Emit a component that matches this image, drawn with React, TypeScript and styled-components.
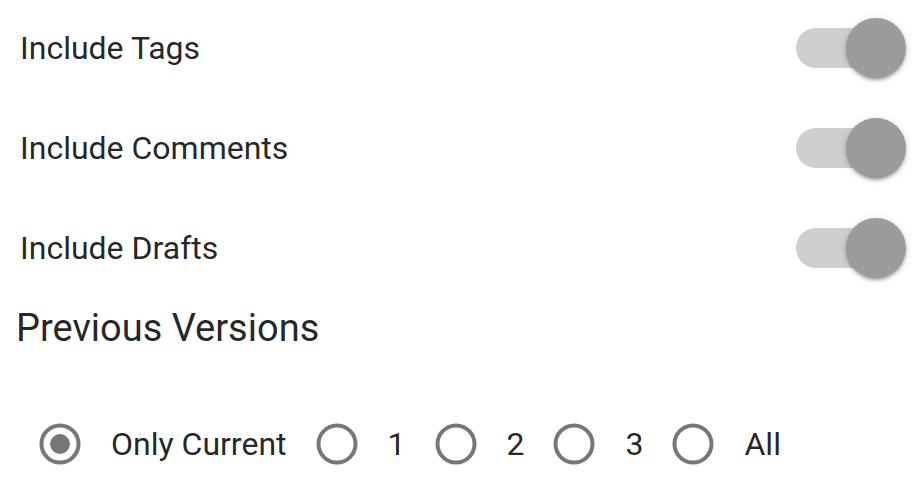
import * as React from 'react'
import styled, { createGlobalStyle } from 'styled-components'

const options = [
  { label: 'Include Tags', on: true },
  { label: 'Include Comments', on: true },
  { label: 'Include Drafts', on: true }
]

const versions = ['Only Current', '1', '2', '3', 'All']

const App: React.FC = () => {
  const [toggles, setToggles] = React.useState(options.map(o => o.on))
  const [version, setVersion] = React.useState('Only Current')

  const flip = (i: number) =>
    setToggles(prev => prev.map((v, j) => (j === i ? !v : v)))

  return (
    <>
      <Global />
      <Page>
        <SwitchList>
          {options.map((o, i) => (
            <SwitchRow key={o.label} onClick={() => flip(i)}>
              <Label>{o.label}</Label>
              <Switch>
                <Track />
                <Thumb on={toggles[i]} />
              </Switch>
            </SwitchRow>
          ))}
        </SwitchList>
        <Heading>Previous Versions</Heading>
        <RadioGroup>
          {versions.map(v => (
            <RadioItem key={v} onClick={() => setVersion(v)}>
              <RadioIcon viewBox="0 0 42 42">
                <circle cx="21" cy="21" r="18.5" fill="none" stroke="#777" strokeWidth="4" />
                {version === v && <circle cx="21" cy="21" r="10" fill="#777" />}
              </RadioIcon>
              <RadioLabel>{v}</RadioLabel>
            </RadioItem>
          ))}
        </RadioGroup>
      </Page>
    </>
  )
}

const Global = createGlobalStyle`
  body {
    margin: 0;
    background: #fff;
    font-family: Roboto, "Noto Sans", sans-serif;
    color: rgba(0, 0, 0, 0.87);
  }
`

const Page = styled.main`
  width: 912px;
  height: 481px;
  overflow: hidden;
`

const SwitchList = styled.div`
  display: flex;
  flex-direction: column;
  gap: 4px;
`

const SwitchRow = styled.div`
  display: flex;
  align-items: center;
  justify-content: space-between;
  height: 96px;
  padding: 0 6px 0 20px;
  cursor: pointer;
`

const Label = styled.span`
  font-size: 32px;
`

const Switch = styled.div`
  position: relative;
  width: 110px;
  height: 60px;
`

const Track = styled.div`
  position: absolute;
  left: 0;
  top: 10px;
  width: 102px;
  height: 40px;
  border-radius: 20px;
  background: #cfcfcf;
`

const Thumb = styled.div<{ on: boolean }>`
  position: absolute;
  top: 0;
  left: ${p => (p.on ? '50px' : '0')};
  width: 60px;
  height: 60px;
  border-radius: 50%;
  background: #9b9b9b;
  box-shadow: 0 3px 3px -1px rgba(0, 0, 0, 0.2), 0 2px 4px 0 rgba(0, 0, 0, 0.14),
    0 1px 8px 0 rgba(0, 0, 0, 0.12);
`

const Heading = styled.h2`
  margin: 0;
  height: 64px;
  line-height: 64px;
  padding-left: 16px;
  font-size: 38px;
  font-weight: 400;
`

const RadioGroup = styled.div`
  display: flex;
  align-items: center;
  gap: 29px;
  margin-top: 63px;
  padding-left: 39px;
`

const RadioItem = styled.label`
  display: flex;
  align-items: center;
  gap: 30px;
  cursor: pointer;
`

const RadioIcon = styled.svg`
  width: 42px;
  height: 42px;
`

const RadioLabel = styled.span`
  font-size: 32px;
`

export default App
